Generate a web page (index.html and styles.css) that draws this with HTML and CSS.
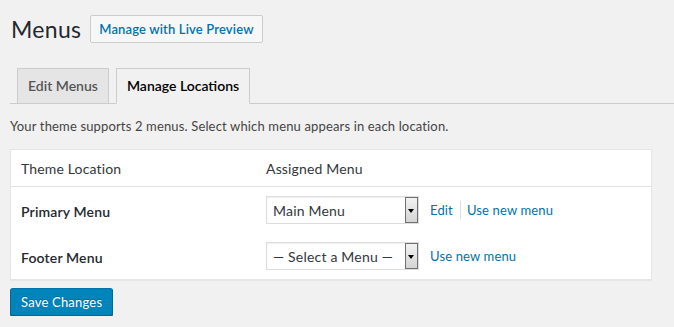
FILE: index.html
```html
<!DOCTYPE html>
<html lang="en">
<head>
    <meta charset="UTF-8">
    <title>Menus</title>
    <link rel="stylesheet" href="styles.css">
</head>
<body>
    <div class="wrap">
        <div class="page-header">
            <h1>Menus</h1>
            <a class="title-action" href="#">Manage with Live Preview</a>
        </div>

        <div class="nav-tabs">
            <a class="nav-tab" href="#">Edit Menus</a>
            <a class="nav-tab active" href="#">Manage Locations</a>
        </div>

        <p class="intro">Your theme supports 2 menus. Select which menu appears in each location.</p>

        <table class="locations">
            <thead>
                <tr>
                    <th class="col-location">Theme Location</th>
                    <th class="col-menu">Assigned Menu</th>
                </tr>
            </thead>
            <tbody>
                <tr>
                    <td class="location-name">Primary Menu</td>
                    <td>
                        <div class="menu-cell">
                            <div class="select-box">
                                <select>
                                    <option>Main Menu</option>
                                </select>
                                <span class="select-arrow"></span>
                            </div>
                            <div class="row-links">
                                <a href="#">Edit</a>
                                <span class="sep"></span>
                                <a href="#">Use new menu</a>
                            </div>
                        </div>
                    </td>
                </tr>
                <tr>
                    <td class="location-name">Footer Menu</td>
                    <td>
                        <div class="menu-cell">
                            <div class="select-box">
                                <select>
                                    <option>&mdash; Select a Menu &mdash;</option>
                                </select>
                                <span class="select-arrow"></span>
                            </div>
                            <div class="row-links">
                                <a href="#">Use new menu</a>
                            </div>
                        </div>
                    </td>
                </tr>
            </tbody>
        </table>

        <div class="submit">
            <button class="button-primary" type="button">Save Changes</button>
        </div>
    </div>
</body>
</html>
```

FILE: styles.css
```css
/* General */
body {
    margin: 0;
    background: #f1f1f1;
    color: #444;
    font-family: 'Lato', 'Open Sans', sans-serif;
    font-size: 13px;
    line-height: 1.4;
    letter-spacing: 0.15px;
}

a {
    color: #0073aa;
    text-decoration: none;
}

.wrap {
    padding: 14px 0 0 10px;
}

/* Header */
.page-header {
    display: flex;
    align-items: center;
    gap: 9px;
}

.page-header h1 {
    margin: 0 0 0 1px;
    font-size: 23px;
    font-weight: 400;
    line-height: 30px;
    color: #23282d;
    letter-spacing: 0.3px;
}

.title-action {
    display: block;
    height: 26px;
    line-height: 26px;
    padding: 0 8px;
    border: 1px solid #ccc;
    border-radius: 2px;
    background: #f7f7f7;
    font-size: 13px;
    font-weight: 600;
}

/* Tabs */
.nav-tabs {
    display: flex;
    margin-top: 15px;
    padding-top: 9px;
    border-bottom: 1px solid #ccc;
}

.nav-tab {
    margin: 0 0 -1px 7px;
    padding: 5px 10px;
    line-height: 24px;
    border: 1px solid #ccc;
    background: #e5e5e5;
    color: #555;
    font-size: 14px;
    font-weight: 600;
    letter-spacing: 0;
}

.nav-tab.active {
    background: #f1f1f1;
    border-bottom-color: #f1f1f1;
    color: #000;
}

.intro {
    margin: 13px 0;
    line-height: 19px;
}

/* Locations table */
.locations {
    width: 642px;
    border: 1px solid #e5e5e5;
    border-spacing: 0;
    background: #fff;
    box-shadow: 0 1px 1px rgba(0, 0, 0, 0.04);
}

.locations th {
    padding: 9px 10px 7px;
    height: 20px;
    border-bottom: 1px solid #e1e1e1;
    text-align: left;
    font-weight: 400;
    font-size: 14px;
    color: #32373c;
}

.locations .col-location {
    width: 225px;
}

.locations td {
    padding: 9px 10px;
    font-size: 14px;
}

.locations td.location-name {
    padding: 11px 10px 7px;
    font-weight: 600;
    color: #23282d;
}

.menu-cell {
    display: flex;
    align-items: center;
    gap: 11px;
}

.select-box {
    position: relative;
    width: 153px;
    height: 28px;
}

.select-box select {
    appearance: none;
    -webkit-appearance: none;
    width: 100%;
    height: 28px;
    margin: 0;
    padding: 0 18px 0 6px;
    border: 1px solid #ddd;
    border-radius: 0;
    background: #fff;
    box-shadow: inset 0 1px 2px rgba(0, 0, 0, 0.07);
    font-family: inherit;
    font-size: 14px;
    letter-spacing: 0.2px;
    color: #32373c;
}

.select-arrow {
    position: absolute;
    top: 1px;
    right: 1px;
    width: 11px;
    height: 24px;
    border: 1px solid #707070;
    background: linear-gradient(#f2f2f2, #d4d4d4);
    pointer-events: none;
}

.select-arrow::after {
    content: "";
    position: absolute;
    top: 11px;
    left: 2px;
    border-left: 3.5px solid transparent;
    border-right: 3.5px solid transparent;
    border-top: 4px solid #000;
}

.row-links {
    display: flex;
    align-items: center;
    font-size: 13px;
}

.row-links .sep {
    width: 1px;
    height: 18px;
    margin: 0 6px 0 7px;
    background: #ddd;
}

/* Submit */
.submit {
    margin-top: 8px;
}

.button-primary {
    height: 28px;
    padding: 0 10px 1px;
    border: 1px solid #0073aa;
    border-color: #0073aa #006799 #006799;
    border-radius: 3px;
    background: #0085ba;
    box-shadow: 0 1px 0 #006799;
    color: #fff;
    font-family: inherit;
    font-size: 13px;
    letter-spacing: 0.2px;
    text-shadow: 0 -1px 1px #006799;
}
```
